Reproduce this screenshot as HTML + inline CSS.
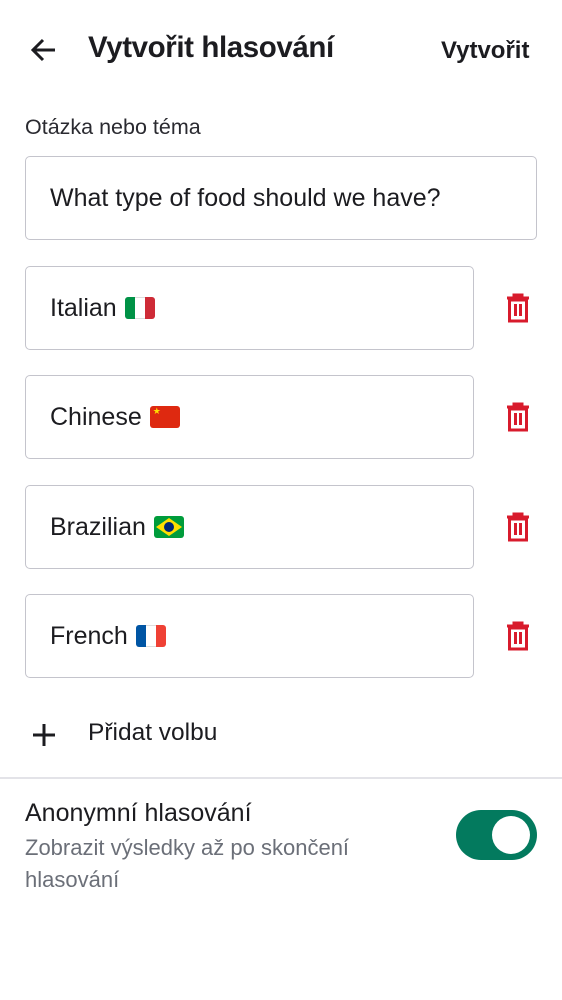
<!DOCTYPE html>
<html><head><meta charset="utf-8"><style>
*{margin:0;padding:0;box-sizing:border-box}
body{width:562px;height:1000px;background:#fff;font-family:"Liberation Sans",sans-serif;color:#1c1c20;position:relative;overflow:hidden}
.a{position:absolute}
.box{position:absolute;left:25px;border:1.5px solid #c4c4cc;border-radius:5px;height:84px;font-size:25px;padding-left:24px;display:flex;align-items:center}
.flag{display:inline-flex;width:30px;height:22px;margin-left:8px;border-radius:3px;overflow:hidden;vertical-align:middle}
.trash{position:absolute;left:505px}
</style></head><body>
<svg class="a" style="left:29px;top:37px" width="28" height="26" viewBox="0 0 28 26"><path d="M26 13H4M14 3L4 13l10 10" stroke="#1c1c20" stroke-width="3" fill="none"/></svg>
<div class="a" style="left:88px;top:31px;font-size:29.5px;font-weight:bold;letter-spacing:-0.4px">Vytvořit hlasování</div>
<div class="a" style="left:441px;top:37px;font-size:24px;font-weight:bold">Vytvořit</div>
<div class="a" style="left:25px;top:115px;font-size:21.5px;color:#2a2a30">Otázka nebo téma</div>
<div class="box" style="top:156px;width:512px">What type of food should we have?</div>
<div class="box" style="top:266px;width:449px">Italian<span class="flag"><i style="flex:1;background:#009246"></i><i style="flex:1;background:#fff;border-top:1px solid #ddd;border-bottom:1px solid #ddd"></i><i style="flex:1;background:#ce2b37"></i></span></div>
<div class="box" style="top:375px;width:449px">Chinese<span class="flag" style="background:#de2910;color:#ffde00;font-size:9px;line-height:10px;padding-left:3px">★</span></div>
<div class="box" style="top:485px;width:449px">Brazilian<span class="flag" style="background:#009c3b;align-items:center;justify-content:center"><svg width="30" height="22"><polygon points="15,2 28,11 15,20 2,11" fill="#ffdf00"/><circle cx="15" cy="11" r="5" fill="#002776"/></svg></span></div>
<div class="box" style="top:594px;width:449px">French<span class="flag"><i style="flex:1;background:#0055a4"></i><i style="flex:1;background:#fff;border-top:1px solid #ddd;border-bottom:1px solid #ddd"></i><i style="flex:1;background:#ef4135"></i></span></div>
<svg class="trash" style="top:293px" width="26" height="30" viewBox="0 0 26 30"><path d="M2 5h22M9 5V2h8v3" stroke="#d81b2c" stroke-width="3" fill="none"/><rect x="4.5" y="7" width="17" height="21" fill="none" stroke="#d81b2c" stroke-width="3"/><path d="M10.5 11v12M15.5 11v12" stroke="#d81b2c" stroke-width="3"/></svg>
<svg class="trash" style="top:402px" width="26" height="30" viewBox="0 0 26 30"><path d="M2 5h22M9 5V2h8v3" stroke="#d81b2c" stroke-width="3" fill="none"/><rect x="4.5" y="7" width="17" height="21" fill="none" stroke="#d81b2c" stroke-width="3"/><path d="M10.5 11v12M15.5 11v12" stroke="#d81b2c" stroke-width="3"/></svg>
<svg class="trash" style="top:512px" width="26" height="30" viewBox="0 0 26 30"><path d="M2 5h22M9 5V2h8v3" stroke="#d81b2c" stroke-width="3" fill="none"/><rect x="4.5" y="7" width="17" height="21" fill="none" stroke="#d81b2c" stroke-width="3"/><path d="M10.5 11v12M15.5 11v12" stroke="#d81b2c" stroke-width="3"/></svg>
<svg class="trash" style="top:621px" width="26" height="30" viewBox="0 0 26 30"><path d="M2 5h22M9 5V2h8v3" stroke="#d81b2c" stroke-width="3" fill="none"/><rect x="4.5" y="7" width="17" height="21" fill="none" stroke="#d81b2c" stroke-width="3"/><path d="M10.5 11v12M15.5 11v12" stroke="#d81b2c" stroke-width="3"/></svg>
<svg class="a" style="left:32px;top:723px" width="24" height="24" viewBox="0 0 24 24"><path d="M12 1v22M1 12h22" stroke="#1c1c20" stroke-width="3"/></svg>
<div class="a" style="left:88px;top:719px;font-size:24.5px">Přidat volbu</div>
<div class="a" style="left:0;top:777px;width:562px;height:1.5px;background:#e3e3e8"></div>
<div class="a" style="left:25px;top:799px;font-size:25px">Anonymní hlasování</div>
<div class="a" style="left:25px;top:832px;font-size:22px;color:#6b6f78;line-height:32px;width:400px">Zobrazit výsledky až po skončení hlasování</div>
<div class="a" style="left:456px;top:810px;width:81px;height:50px;border-radius:25px;background:#037a5e"></div>
<div class="a" style="left:492px;top:816px;width:38px;height:38px;border-radius:50%;background:#fff"></div>
</body></html>
